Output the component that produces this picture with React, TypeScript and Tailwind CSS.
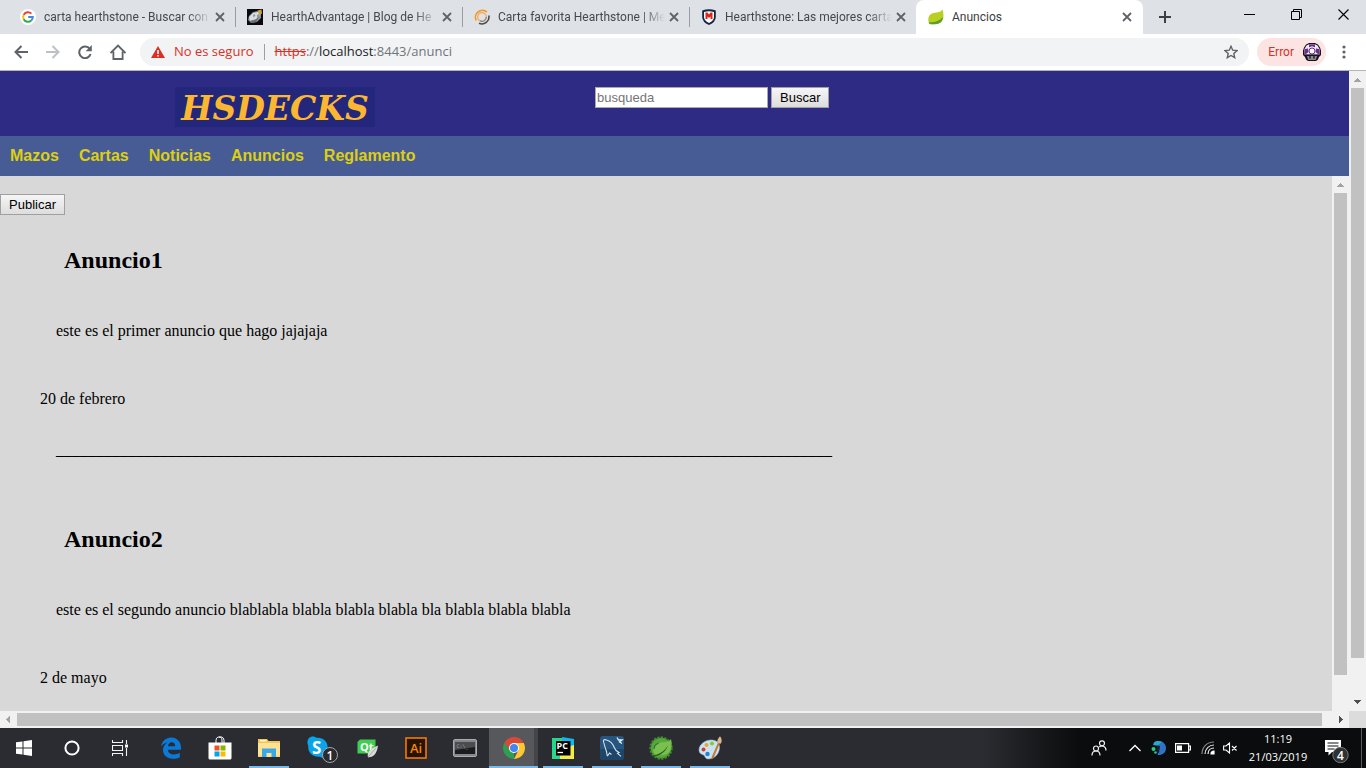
import type { ReactNode } from 'react';

const UI = "font-['Open_Sans','Noto_Sans',sans-serif]";
const LABEL = "font-['Roboto','Noto_Sans',sans-serif]";
const SERIF = "font-['Liberation_Serif','Times_New_Roman',serif]";

/* ---------- Favicons ---------- */

const GoogleIcon = () => (
  <svg viewBox="0 0 16 16" className="size-4 shrink-0">
    <circle cx="8" cy="8" r="8" fill="#fff" />
    <g fill="none" strokeWidth="2">
      <path d="M11.4 4.6A4.8 4.8 0 0 0 3.7 5.9" stroke="#ea4335" />
      <path d="M3.7 5.9a4.8 4.8 0 0 0 0 4.3" stroke="#fbbc05" />
      <path d="M3.7 10.2a4.8 4.8 0 0 0 7.5 1.4" stroke="#34a853" />
      <path d="M11.2 11.6A4.8 4.8 0 0 0 12.8 8H8.2" stroke="#4285f4" />
    </g>
  </svg>
);

const CardIcon = () => (
  <svg viewBox="0 0 16 16" className="size-4 shrink-0">
    <rect width="16" height="16" fill="#0b0b0d" />
    <path d="M1 11 2 7l4-4 5-1 3 2v5l-4 4-6 1z" fill="#8c9196" />
    <path d="M2 8l4-4 5-1 2 3-4 4-6 2z" fill="#d9dde0" />
    <path d="M6 6l1.500-1 1 1.500-2 2zM10 6l2-1 .5 2-2.500 2z" fill="#7f9bb0" />
    <path d="M10.500 1.500l4-1 .5 4-2.500 1.500z" fill="#c9a52c" />
    <path d="M3 12l5-1 4-3-3 5-5 1z" fill="#6b7076" />
  </svg>
);

const RingIcon = () => (
  <svg viewBox="0 0 16 16" className="size-4 shrink-0" fill="none">
    <path d="M2.200 11.500A7 7 0 0 1 13 3" stroke="#f7941d" strokeWidth="1.600" />
    <path d="M14.800 6.500A7 7 0 0 1 5 14.300" stroke="#4a4a4c" strokeWidth="1.600" />
    <circle cx="8" cy="8" r="4.300" stroke="#f2a650" strokeWidth="1.200" />
    <path d="M12.300 8A4.300 4.300 0 0 1 6 11.800" stroke="#8b8580" strokeWidth="1.200" />
  </svg>
);

const ShieldIcon = () => (
  <svg viewBox="0 0 16 16" className="size-4 shrink-0">
    <path d="M1.200 1.500Q8-.8 14.800 1.500V8q0 5-6.800 8-6.800-3-6.800-8z" fill="#14263f" />
    <path d="M3 3q5-1.500 10 0v5q0 3.600-5 6-5-2.400-5-6z" fill="#fff" />
    <path d="M4.500 3.500h2L8 5.500l1.500-2h2V10h-2V7.500L8 9 6.500 7.500V10h-2z" fill="#e0221c" />
  </svg>
);

const LeafIcon = () => (
  <svg viewBox="0 0 16 16" className="size-4 shrink-0">
    <path d="M14.500.5c1.500 5 1.600 10.500-2 13-3 2-7 1.800-11.500 1.500C-.5 10 .3 6 4 4.500 8 3 12 4 14.500.5z" fill="#b9cf23" />
    <path d="M1 13.200c5 .6 10-.7 14-5.200-.3 3-1.300 4.700-2.700 5.700-3 1.900-7 1.700-10.800 1.400z" fill="#5c9e2c" />
  </svg>
);

/* ---------- Browser chrome ---------- */

const Cross = () => (
  <svg viewBox="0 0 10 10" className="size-2.5" stroke="#5f6368" strokeWidth="1.800">
    <path d="M1 1l8 8M9 1L1 9" />
  </svg>
);

type TabProps = { icon: ReactNode; title: string; divider?: boolean };

const Tab = ({ icon, title, divider = true }: TabProps) => (
  <div className="flex h-[34px] w-[227px] min-w-0 items-center pl-3">
    {icon}
    <span className="ml-2 min-w-0 flex-1 whitespace-nowrap text-[12px] leading-4 text-[#45494d] [mask-image:linear-gradient(to_right,#000_86%,transparent)]">
      {title}
    </span>
    <button aria-label="Cerrar pestaña" className="ml-1 mr-2.5 shrink-0">
      <Cross />
    </button>
    <span className={divider ? '-mr-px h-5 w-px bg-[#9a9ea3]' : '-mr-px h-5 w-px'} />
  </div>
);

const TabStrip = () => (
  <div className={`flex h-[34px] items-center bg-[#dee1e6] pl-2 ${LABEL}`}>
    <Tab icon={<GoogleIcon />} title="carta hearthstone - Buscar con" />
    <Tab icon={<CardIcon />} title="HearthAdvantage | Blog de He" />
    <Tab icon={<RingIcon />} title="Carta favorita Hearthstone | Me" />
    <Tab icon={<ShieldIcon />} title="Hearthstone: Las mejores carta" divider={false} />
    <div className="flex h-[34px] w-[227px] items-center rounded-t-lg bg-white pl-3">
      <LeafIcon />
      <span className="ml-2 flex-1 text-[12px] leading-4 text-[#3c4043]">Anuncios</span>
      <button aria-label="Cerrar pestaña" className="mr-[11px]">
        <Cross />
      </button>
    </div>
    <button aria-label="Nueva pestaña" className="ml-4">
      <svg viewBox="0 0 12 12" className="size-3" stroke="#3c4043" strokeWidth="2">
        <path d="M6 0v12M0 6h12" />
      </svg>
    </button>
    <div className="ml-auto flex items-center gap-9 pb-1.5 pr-[17px]">
      <button aria-label="Minimizar">
        <svg viewBox="0 0 11 11" className="size-[11px]" stroke="#000">
          <path d="M0 5.500h11" />
        </svg>
      </button>
      <button aria-label="Restaurar">
        <svg viewBox="0 0 11 11" className="size-[11px]" stroke="#000" fill="none">
          <path d="M.5 2.500h8v8h-8zM2.500 2.500v-2h8v8h-2" />
        </svg>
      </button>
      <button aria-label="Cerrar">
        <svg viewBox="0 0 11 11" className="size-[11px]" stroke="#000" strokeWidth="1.100">
          <path d="M.5.5l10 10M10.500.5l-10 10" />
        </svg>
      </button>
    </div>
  </div>
);

const Mushroom = () => (
  <svg viewBox="0 0 18 18" className="size-[18px]">
    <path d="M6 0h6l3 1.500 2 3 1 3V12l-2 2-1 2.500-2 1.500H5l-2-1.500L2 14l-2-2V7.500l1-3 2-3z" fill="#17131b" />
    <path d="M6.500 1h5l3 1.500 2 3.500v5.500h-15V6l2-3.500z" fill="#eee8f3" />
    <path d="M6 1.200h6v3L9 3.200 6 4.200zM2 6l3-.5L5.500 9 3 11H1.500zM16 6l-3-.5-.5 3.500 2.500 2h1.500z" fill="#6d2a91" />
    <circle cx="9" cy="8" r="3" fill="#fff" stroke="#6d2a91" />
    <path d="M4 13h10l-1 3.500-1 .5H6l-1-.5z" fill="#8a8a8e" />
    <path d="M7 13v2.500M11 13v2.500M2 12.300h14" stroke="#17131b" strokeWidth="1.300" />
  </svg>
);

const Toolbar = () => (
  <div className="flex h-9 items-center bg-white pl-3.5 pr-5">
    <div className="flex items-center gap-[18px]">
      <button aria-label="Atrás">
        <svg viewBox="0 0 14 14" className="size-3.5" fill="none" stroke="#5f6368" strokeWidth="2">
          <path d="M14 7H1.500M7.500 1L1.500 7l6 6" />
        </svg>
      </button>
      <button aria-label="Adelante">
        <svg viewBox="0 0 14 14" className="size-3.5" fill="none" stroke="#bdc1c6" strokeWidth="2">
          <path d="M0 7h12.500M6.500 1l6 6-6 6" />
        </svg>
      </button>
      <button aria-label="Recargar">
        <svg viewBox="0 0 14 14" className="size-3.5">
          <path d="M11.800 4A5.800 5.800 0 1 0 12.600 9" fill="none" stroke="#5f6368" strokeWidth="2" />
          <path d="M13.800 0v6.200H7.600z" fill="#5f6368" />
        </svg>
      </button>
      <button aria-label="Inicio">
        <svg viewBox="0 0 16 16" className="size-4" fill="none" stroke="#5f6368" strokeWidth="1.800">
          <path d="M.6 9L8 1.600 15.400 9M3.400 7.500V15h9.200V7.500" />
        </svg>
      </button>
    </div>
    <div className="ml-3.5 flex h-7 flex-1 items-center rounded-full bg-[#f1f3f4] px-[11px] text-[13px]">
      <svg viewBox="0 0 14 12" className="h-3 w-3.5">
        <path d="M7 0l7 12H0z" fill="#d93025" />
        <path d="M7 4v4M7 9v1.500" stroke="#fff" strokeWidth="1.500" />
      </svg>
      <span className="ml-[9px] text-[#d93025]">No es seguro</span>
      <span className="mx-2.5 h-4 w-px bg-[#9aa0a6]" />
      <span className="text-[#70757a]">
        <span className="text-[#d93025] line-through">https</span>
        ://<span className="text-[#202124]">localhost</span>:8443/anunci
      </span>
      <button aria-label="Añadir a marcadores" className="ml-auto">
        <svg viewBox="0 0 14 14" className="size-3.5" fill="none" stroke="#5f6368" strokeWidth="1.400">
          <path d="M7 1.300l1.700 3.900 4.300.4-3.200 2.900.9 4.200L7 10.500l-3.700 2.200.9-4.200L1 5.600l4.300-.4z" />
        </svg>
      </button>
    </div>
    <button
      className={`ml-2 flex h-7 items-center gap-[9px] rounded-full bg-[#fce4e2] pl-[11px] pr-[5px] text-[12px] text-[#d93025] ${LABEL}`}
    >
      Error
      <Mushroom />
    </button>
    <button aria-label="Menú" className="ml-4">
      <svg viewBox="0 0 4 14" className="h-3.5 w-1" fill="#5f6368">
        <circle cx="2" cy="2" r="1.600" />
        <circle cx="2" cy="7" r="1.600" />
        <circle cx="2" cy="12" r="1.600" />
      </svg>
    </button>
  </div>
);

/* ---------- Scrollbars ---------- */

const Arrow = ({ d, color }: { d: string; color: string }) => (
  <svg viewBox="0 0 17 17" className="size-[17px] shrink-0" fill={color} shapeRendering="crispEdges">
    <path d={d} />
  </svg>
);

const VerticalBar = ({ end = false }: { end?: boolean }) => (
  <div className="flex w-[17px] shrink-0 flex-col bg-[#f1f1f1]">
    <Arrow d="M5 11h7L8.500 7z" color="#a3a3a3" />
    <div className="flex-1 px-0.5 pb-9">
      <div className="h-full bg-[#c1c1c1]" />
    </div>
    {end && <Arrow d="M5 6h7l-3.500 4z" color="#505050" />}
  </div>
);

const HorizontalBar = () => (
  <div className="flex h-[17px] shrink-0 bg-[#f1f1f1]">
    <Arrow d="M10 5v7L6 8.500z" color="#a3a3a3" />
    <div className="flex-1 py-0.5 pr-2.5">
      <div className="h-full bg-[#c1c1c1]" />
    </div>
    <Arrow d="M7 5v7l4-3.500z" color="#505050" />
    <div className="w-[17px] bg-[#dcdcdc]" />
  </div>
);

/* ---------- Site ---------- */

const BUTTON =
  'h-[21px] border border-[#a0a0a0] bg-linear-to-b from-[#f6f6f6] to-[#dddddd] px-2 text-[13px] leading-[18px] text-black';

const SECTIONS = ['Mazos', 'Cartas', 'Noticias', 'Anuncios', 'Reglamento'];

const ADS = [
  { title: 'Anuncio1', body: 'este es el primer anuncio que hago jajajaja', date: '20 de febrero' },
  {
    title: 'Anuncio2',
    body: 'este es el segundo anuncio blablabla blabla blabla blabla bla blabla blabla blabla',
    date: '2 de mayo',
  },
];

const Site = () => (
  <div className="flex min-w-0 flex-1 flex-col font-['Liberation_Sans',Arial,sans-serif]">
    <header className="flex h-[65px] items-start bg-[#2e2b85] pl-[175px] pt-4">
      <a
        href="#inicio"
        className="flex h-10 w-[200px] items-center justify-center bg-[#22277b] pt-1 font-['DejaVu_Serif',serif] text-[33px] font-bold italic leading-9 text-[#fbb731]"
      >
        HSDECKS
      </a>
      <form className="ml-[220px] flex gap-[3px]" onSubmit={(e) => e.preventDefault()}>
        <input
          type="text"
          aria-label="busqueda"
          placeholder="busqueda"
          className="h-[21px] w-[173px] border border-[#a9a9a9] bg-white px-px text-[13px] text-black outline-none placeholder:text-[#757575]"
        />
        <button className={BUTTON}>Buscar</button>
      </form>
    </header>
    <nav className="flex h-10 items-center gap-5 bg-[#475c94] px-2.5 text-[16px] font-bold text-[#ddcf12]">
      {SECTIONS.map((name) => (
        <a key={name} href={`#${name.toLowerCase()}`}>
          {name}
        </a>
      ))}
    </nav>
    <div className="flex min-h-0 flex-1">
      <main className="min-w-0 flex-1 overflow-hidden bg-[#d8d8d8] pt-[18px]">
        <button className={`${BUTTON} block`}>Publicar</button>
        <div className={`mt-8 flex flex-col gap-[67px] pl-10 text-[16px] leading-[18px] text-black ${SERIF}`}>
          {ADS.map((ad, i) => (
            <article key={ad.title}>
              <h2 className="pl-6 text-[24px] font-bold leading-[27px]">{ad.title}</h2>
              <p className="mt-12 pl-4">{ad.body}</p>
              <p className="mt-[50px]">{ad.date}</p>
              {i < ADS.length - 1 && <p className="mt-[33px] pl-4">{'_'.repeat(97)}</p>}
            </article>
          ))}
        </div>
      </main>
      <VerticalBar />
    </div>
  </div>
);

/* ---------- Taskbar ---------- */

const StartIcon = () => (
  <svg viewBox="0 0 16 16" className="size-4" fill="#fff">
    <path d="M0 2.300L6.500 1.400v6.100H0zM7.500 1.200L16 0v7.500H7.500zM0 8.500h6.500v6.100L0 13.700zM7.500 8.500H16V16l-8.500-1.200z" />
  </svg>
);

const CortanaIcon = () => (
  <svg viewBox="0 0 16 16" className="size-4" fill="none" stroke="#fff" strokeWidth="2">
    <circle cx="8" cy="8" r="6.600" />
  </svg>
);

const TaskViewIcon = () => (
  <svg viewBox="0 0 16 16" className="size-4" fill="none" stroke="#f2f2f2" strokeWidth="1.100">
    <path d="M.5 0v2.500h10V0M.5 16v-2.500h10V16M.5 5.500h10v5H.5zM14.500 0v4M14.500 8v8" />
    <path d="M13 4.500h3v3h-3z" fill="#fff" stroke="none" />
  </svg>
);

const EdgeIcon = () => (
  <svg viewBox="0 0 22 22" className="size-[22px]">
    <path
      d="M1 9.500C2 4 6 .5 11.200.5 17 .5 21 5 21 10.500v2.300H7.800c.3 3.200 3 4.700 6 4.700 2.200 0 4.200-.6 6-1.700v4.400c-2 1-4.300 1.500-6.800 1.500C7 21.700 3 18.200 3 13c0-3.300 1.900-6 4.900-7.400C4.900 6 2.600 7.300 1 9.500zM7.900 9.200h7.300C15.300 6.700 14 5.200 11.700 5.200 9.600 5.200 8.200 6.900 7.900 9.200z"
      fill="#0a7ad8"
    />
  </svg>
);

const StoreIcon = () => (
  <svg viewBox="0 0 24 24" className="size-6">
    <path d="M8 7V4.500C8 2 9.500 1 11 1h2c1.500 0 3 1 3 3.500V7M11 1c2 0 3 1 3 3v3" fill="none" stroke="#fff" />
    <path d="M.5 6.500h23V22a1.500 1.500 0 0 1-1.500 1.500H2A1.500 1.500 0 0 1 .5 22z" fill="#fff" />
    <path d="M6.500 9.500h5v5h-5z" fill="#f25022" />
    <path d="M12.500 9.500h5v5h-5z" fill="#7fba00" />
    <path d="M6.500 15.500h5v5h-5z" fill="#00a4ef" />
    <path d="M12.500 15.500h5v5h-5z" fill="#ffb900" />
  </svg>
);

const ExplorerIcon = () => (
  <svg viewBox="0 0 22 20" className="h-5 w-[22px]">
    <path d="M0 1h9l1.500 2H22v16H0z" fill="#f0c65a" />
    <path d="M2 2h6.500v1.500H2z" fill="#fff4cf" />
    <path d="M0 5h22v14H0z" fill="#ffe394" />
    <path d="M4 19v-8.500h14V19h-4.500v-4h-5v4z" fill="#38a8e8" />
    <path d="M0 17.500h4V19H0zM18 17.500h4V19h-4z" fill="#f5d173" />
  </svg>
);

const SkypeIcon = () => (
  <svg viewBox="0 0 40 34" className="h-[34px] w-10">
    <path
      d="M11 7C14 4.500 17 5.500 18.500 6.700 26 6 30.500 11.500 29.500 18c2 3.500.5 8.500-4 8.800-1.500 0-2.500-.3-3.500-1C15 26.500 9.500 21.500 10.300 14.800 9 12.500 9 9 11 7z"
      fill="#0aa4ea"
    />
    <text x="14" y="22.500" fill="#fff" fontSize="17" fontWeight="700" fontFamily="Open Sans, sans-serif">
      S
    </text>
    <circle cx="32" cy="24" r="7.500" fill="#2a2b2f" stroke="#a5a5a7" />
    <text x="32" y="28.500" textAnchor="middle" fill="#fff" fontSize="12" fontWeight="600" fontFamily="Open Sans, sans-serif">
      1
    </text>
  </svg>
);

const QtIcon = () => (
  <svg viewBox="-2 -1 24 22" className="h-[22px] w-6">
    <path d="M3 1.500h15.500V12L15 15.500H.5V4z" fill="#41cd52" />
    <text x="3" y="12.500" fill="#fff" fontSize="11" fontWeight="700" fontFamily="Open Sans, sans-serif">
      Qt
    </text>
    <path d="M21 7.500c-1 7-3.500 11-8 11.500l-2 .5c-1.500-6 3-9 10-12z" fill="#d9dadb" />
    <path d="M19 10l-8 9" stroke="#909295" strokeWidth=".7" />
  </svg>
);

const AiIcon = () => (
  <svg viewBox="0 0 22 22" className="size-[22px]">
    <rect x="1" y="1" width="20" height="20" fill="#261300" stroke="#f37a0c" strokeWidth="1.600" />
    <text x="11" y="15.500" textAnchor="middle" fill="#f7850f" fontSize="13" fontWeight="600" fontFamily="Open Sans, sans-serif">
      Ai
    </text>
  </svg>
);

const ConsoleIcon = () => (
  <svg viewBox="0 0 24 18" className="h-[18px] w-6">
    <rect x=".5" y=".5" width="23" height="17" rx="1.500" fill="#85878a" stroke="#a9abad" />
    <rect x="2" y="3" width="20" height="12" fill="#1b1c1e" />
    <path d="M2 3h20v5L2 11z" fill="#4a4c4f" />
    <text x="3.500" y="8.500" fill="#a2a4a7" fontSize="5" fontFamily="DejaVu Sans Mono, monospace">
      C:\_
    </text>
  </svg>
);

const ChromeIcon = () => (
  <svg viewBox="0 0 22 22" className="size-[22px]">
    <path d="M11 11V22A11 11 0 0 1 1.500 5.500z" fill="#2f9e52" />
    <path d="M11 6h9.800A11 11 0 0 1 11 22l4.300-8.500z" fill="#fcc934" />
    <path d="M11 6h9.800A11 11 0 0 0 1.500 5.500L6.700 13.500z" fill="#d9493a" />
    <circle cx="11" cy="11" r="5" fill="#fff" />
    <circle cx="11" cy="11" r="4" fill="#4285f4" />
  </svg>
);

const PyCharmIcon = () => (
  <svg viewBox="0 0 22 22" className="size-[22px]">
    <path d="M0 1h13L9 22H0z" fill="#21d789" />
    <path d="M10 0l12 2v9L11 14z" fill="#10b8ee" />
    <path d="M22 8v14H3l8-11z" fill="#f4ea4a" />
    <path d="M0 14l8-3v11H0z" fill="#2bd98b" />
    <rect x="4" y="4" width="14.500" height="14.500" fill="#000" />
    <text x="4.500" y="11.500" fill="#fff" fontSize="9" fontWeight="700" fontFamily="Open Sans, sans-serif">
      PC
    </text>
    <path d="M5.500 15.500h5.500" stroke="#fff" strokeWidth="1.300" />
  </svg>
);

const MySqlIcon = () => (
  <svg viewBox="0 0 24 24" className="size-6">
    <rect width="24" height="24" rx="3" fill="#26567f" />
    <path d="M0 13h24v8a3 3 0 0 1-3 3H3a3 3 0 0 1-3-3z" fill="#1d4668" />
    <path
      d="M7.500 20c-1-2-.5-3-1-4.500C5.500 12.500 4 8 3.500 5.500 3 4 4.500 3 6.500 4c4 1 6.500 4 8 8 .8 2.200 2 3.500 4.500 4.500l-1.500.8 3.500 3M7.500 20l2-3 2 1.500"
      fill="none"
      stroke="#d7e3ec"
      strokeWidth="1.100"
    />
    <path d="M17 1.500l1.500 2.500h3.500L19.500 6 22 7.500" fill="none" stroke="#e6eef4" strokeWidth="1.300" />
  </svg>
);

const SpringIcon = () => (
  <svg viewBox="0 0 24 24" className="size-6">
    <circle cx="12" cy="12" r="10.500" fill="#4b9a35" stroke="#3f8a2d" strokeWidth="2.400" strokeDasharray="2.200 1.300" />
    <circle cx="12" cy="12" r="9.800" fill="#57a83c" />
    <path d="M22 3c1.500 7 .5 13-5 15.300-4 1.700-8 .7-11.500-.3-2.500-5-1-9 3-10.700C13 5.500 19 7.500 22 3z" fill="#79c04e" />
    <path d="M3 19.500C9 19 15 16 19 9.500 16 17 10 20.500 4 20.500z" fill="#2c5c27" />
    <path d="M5 13c0-3 2-5 4.500-5.800" fill="none" stroke="#2f6a2a" strokeWidth="1.200" />
  </svg>
);

const PaintIcon = () => (
  <svg viewBox="0 0 24 24" className="size-6">
    <path d="M1 14C1 8.500 7 4 13 4c5 0 8.500 2.500 8.500 7 0 6-4 12-11.500 12-3 0-2.500-3-4.500-4S1 17.500 1 14z" fill="#c8e4f4" stroke="#8db7cf" strokeWidth=".6" />
    <circle cx="5.500" cy="13.500" r="2" fill="#d8392f" />
    <circle cx="8.500" cy="9" r="2" fill="#f4a127" />
    <circle cx="14" cy="7.500" r="2.100" fill="#8cc63f" />
    <circle cx="9.500" cy="18" r="2.200" fill="#2a7fd0" />
    <path d="M20 6.500l1.800.8L15.500 22l-2 1.200.3-2.500z" fill="#c9742d" />
    <path d="M19.500 6.800c-.8-2.300.8-4.800 2.500-6.500 1.700 2 2.500 5.500.6 7.500z" fill="#d9b98b" />
  </svg>
);

type TaskProps = { label: string; icon: ReactNode; running?: boolean; active?: boolean };

const TASKS: TaskProps[] = [
  { label: 'Edge', icon: <EdgeIcon /> },
  { label: 'Microsoft Store', icon: <StoreIcon /> },
  { label: 'Explorador', icon: <ExplorerIcon />, running: true },
  { label: 'Skype', icon: <SkypeIcon /> },
  { label: 'Qt', icon: <QtIcon /> },
  { label: 'Illustrator', icon: <AiIcon /> },
  { label: 'Consola', icon: <ConsoleIcon /> },
  { label: 'Chrome', icon: <ChromeIcon />, active: true },
  { label: 'PyCharm', icon: <PyCharmIcon />, running: true },
  { label: 'MySQL Workbench', icon: <MySqlIcon />, running: true },
  { label: 'Spring', icon: <SpringIcon />, running: true },
  { label: 'Paint', icon: <PaintIcon />, running: true },
];

const Task = ({ label, icon, running, active }: TaskProps) => (
  <button
    aria-label={label}
    className={`flex h-10 w-[49px] flex-col items-center ${active ? 'bg-[#56585b] shadow-[inset_-4px_0_#434549]' : ''}`}
  >
    <span className="flex flex-1 items-center">{icon}</span>
    <span className={`-mt-0.5 h-0.5 ${active ? 'w-full bg-[#76b9ed]' : running ? 'w-10 bg-[#76b9ed]' : 'w-10'}`} />
  </button>
);

const Tray = () => (
  <div className={`ml-auto flex items-center text-white ${UI}`}>
    <svg viewBox="0 0 16 16" className="size-4" fill="none" stroke="#f0f0f0" strokeWidth="1.200">
      <circle cx="5" cy="8.500" r="2.500" />
      <path d="M1 15.500c0-3 1.500-4.500 4-4.500s4 1.500 4 4.500" />
      <circle cx="11" cy="3.300" r="2.500" />
      <path d="M8.300 7c2.200-2 6.700-1 6.700 3.500" />
    </svg>
    <svg viewBox="0 0 12 8" className="ml-[22px] h-2 w-3" fill="none" stroke="#fff" strokeWidth="1.300">
      <path d="M.5 7L6 1.500 11.500 7" />
    </svg>
    <svg viewBox="0 0 16 16" className="ml-2.5 size-4">
      <path d="M3 2.500C8-1 15 2 15 8c0 5-4 7.500-8.500 7L8.500 8 6 6 2 5z" fill="#2f74c4" />
      <path d="M3 2.500C6 .5 9 .8 11 2L7 5 2.500 5z" fill="#27a9c9" />
      <path d="M5.500 5.500L9 6l-1 7-2-.5z" fill="#142238" />
      <circle cx="2.500" cy="9" r="2" fill="#20d18a" />
      <circle cx="4.500" cy="12.500" r="1.300" fill="#20c9a0" />
    </svg>
    <svg viewBox="0 0 16 10" className="ml-2 h-2.5 w-4" fill="none" stroke="#fff" strokeWidth="1.200">
      <path d="M.6.6h13v8.800H.6zM13.600 3H15.400v4h-1.800" />
      <path d="M2 2.500h5v5H2z" fill="#fff" stroke="none" />
    </svg>
    <svg viewBox="0 0 14 14" className="ml-2.5 size-3.5" fill="none" strokeWidth="1.200">
      <path d="M1 13C1 6 6 1 13 1" stroke="#8a8a8a" />
      <path d="M4 13c0-5 4-9 9-9" stroke="#dedede" />
      <path d="M7 13c0-3.500 2.500-6 6-6" stroke="#fff" />
      <path d="M10 13c0-2 1-3 3-3v3z" fill="#fff" stroke="#fff" />
    </svg>
    <svg viewBox="0 0 15 12" className="ml-2 h-3 w-[15px]" fill="none" stroke="#fff" strokeWidth="1.100">
      <path d="M.6 4H3l3.500-3v10L3 8H.6zM9 4l4.500 4.500M13.500 4L9 8.500" />
    </svg>
    <div className="ml-[9px] w-[62px] text-center text-[11px] leading-[18px]">
      <div>11:19</div>
      <div>21/03/2019</div>
    </div>
    <svg viewBox="0 0 26 30" className="ml-[15px] h-[30px] w-[26px]">
      <path d="M1 7h16v12H8l-3.500 3.500V19H1z" fill="#fff" />
      <path d="M3.500 10h11M3.500 13h11M3.500 16h7" stroke="#111" />
      <circle cx="16.500" cy="22" r="7.700" fill="#303133" stroke="#77787a" />
      <text x="16.500" y="26.500" textAnchor="middle" fill="#fff" fontSize="12" fontWeight="600" fontFamily="Open Sans, sans-serif">
        4
      </text>
    </svg>
    <span className="ml-[11px] mr-1 h-10 w-px bg-[#5c5c5c]" />
  </div>
);

const Taskbar = () => (
  <footer className="flex h-10 shrink-0 items-center bg-linear-to-r from-[#2b2c31] from-72% to-[#0b0c0d] to-79%">
    <button aria-label="Inicio" className="flex h-10 w-12 items-center justify-center">
      <StartIcon />
    </button>
    <button aria-label="Cortana" className="flex h-10 w-12 items-center justify-center">
      <CortanaIcon />
    </button>
    <button aria-label="Vista de tareas" className="mr-0.5 flex h-10 w-12 items-center justify-center">
      <TaskViewIcon />
    </button>
    {TASKS.map((task) => (
      <Task key={task.label} {...task} />
    ))}
    <Tray />
  </footer>
);

export default function App() {
  return (
    <div className="flex h-screen flex-col overflow-hidden">
      <div className={`shrink-0 border-b border-[#b6b4b6] ${UI}`}>
        <TabStrip />
        <Toolbar />
      </div>
      <div className="flex min-h-0 flex-1">
        <Site />
        <VerticalBar end />
      </div>
      <HorizontalBar />
      <Taskbar />
    </div>
  );
}
